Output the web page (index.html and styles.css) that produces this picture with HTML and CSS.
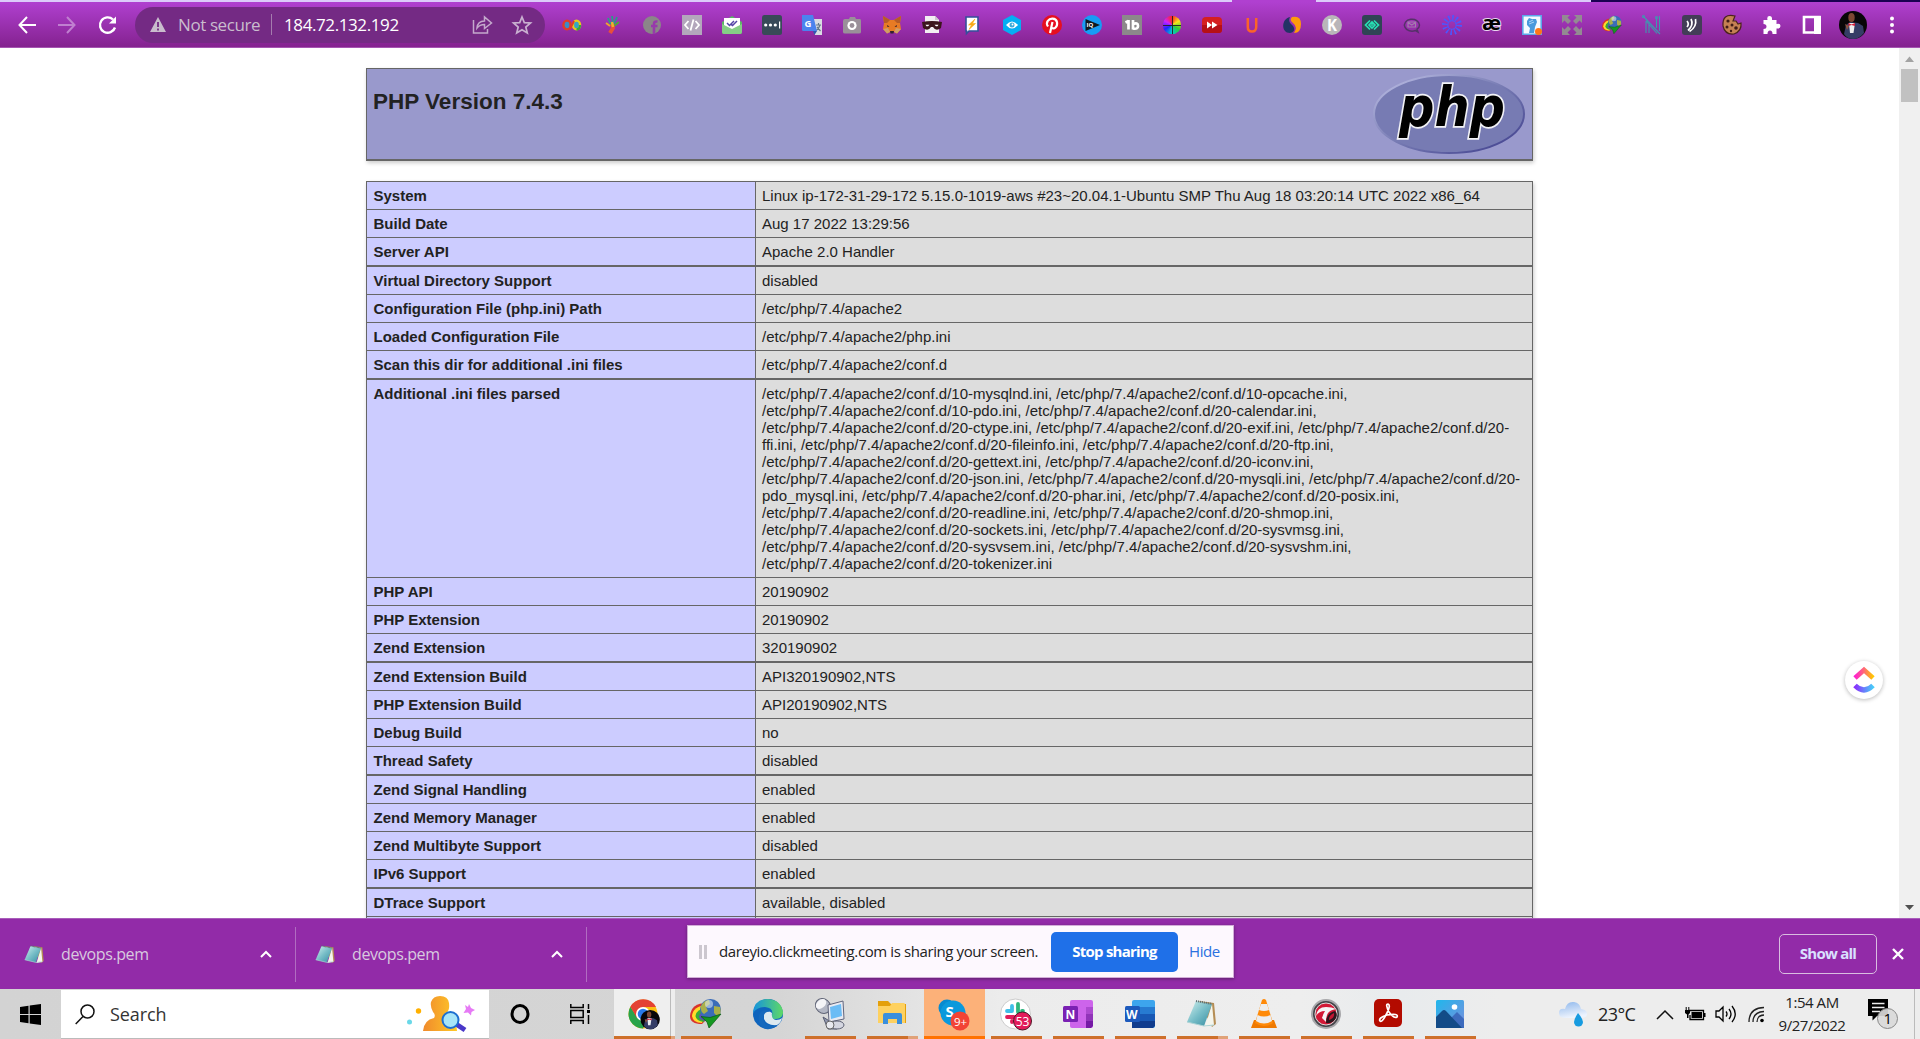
FILE: index.html
```html
<!DOCTYPE html>
<html lang="en">
<head>
<meta charset="utf-8">
<title>phpinfo()</title>
<link rel="stylesheet" href="styles.css">
</head>
<body>
<div class="tabstrip"><i class="tab-light first"></i><i class="tab-active"></i><i class="tab-light second"></i></div>
<header class="toolbar">
  <nav class="nav">
    <svg width="20" height="20" viewBox="0 0 20 20" fill="none" stroke="#fff" stroke-width="2"><path d="M19 10H3M10 2L2.500 10L10 18"/></svg>
    <svg width="20" height="20" viewBox="0 0 20 20" fill="none" stroke="#c07fd0" stroke-width="2"><path d="M1 10H17M10 2L17.500 10L10 18"/></svg>
    <svg width="20" height="20" viewBox="0 0 20 20"><path d="M18 12.500A7.700 7.700 0 1 1 16 4.500" fill="none" stroke="#fff" stroke-width="2.400"/><path d="M19 1.500V8.500H12Z" fill="#fff"/></svg>
  </nav>
  <div class="omnibox">
    <svg width="16" height="15" viewBox="0 0 16 15"><path d="M8 0L16 15H0Z" fill="#c9bccd"/><path d="M8 5V10M8 11.500V13.500" stroke="#742a84" stroke-width="1.800"/></svg>
    <span class="secure">Not secure</span><i class="sep"></i><span class="url">184.72.132.192</span>
    <svg class="share" width="21" height="20" viewBox="0 0 21 20" fill="none" stroke="#c4a9cc" stroke-width="1.500"><path d="M1.500 5V18H15.500V14"/><path d="M5 13C5.500 8 9 6 12.500 6V2L19.500 8L12.500 13.500V9.500C9 9.500 7 10.500 5 13Z"/></svg>
    <svg class="star" width="20" height="20" viewBox="0 0 20 20" fill="none" stroke="#c9b0d0" stroke-width="1.700"><path d="M10 2L12.300 7.600L18.500 8L13.800 12L15.300 18L10 14.800L4.700 18L6.200 12L1.500 8L7.700 7.600Z"/></svg>
  </div>
  <div class="extensions">
    <svg viewBox="0 0 20 20"><ellipse cx="5" cy="10" rx="3.600" ry="4.400" fill="#3a8cc8" stroke="#e03c28" stroke-width="2.400"/><ellipse cx="14.500" cy="10" rx="3.600" ry="4.400" fill="#35a5c5" stroke="#e8c81e" stroke-width="2.400"/><path d="M8 14L12 6" stroke="#e03c28" stroke-width="2"/><path d="M14.500 14.600A4 4.500 0 0 0 18 10" fill="none" stroke="#35a83c" stroke-width="2.200"/></svg>
    <svg viewBox="0 0 20 20" fill="none" stroke-width="1.800"><path d="M9 10L6 3M11 9L10 1M12 9L15 2" stroke="#2a9b8a"/><path d="M12 11L17 7" stroke="#4cad36"/><path d="M8 11L4 8" stroke="#efa32d"/><path d="M10 9L11 13L8 18" stroke="#e7503a" stroke-width="4"/><path d="M10 7L11 12" stroke="#f0b02c" stroke-width="2.500"/></svg>
    <svg viewBox="0 0 20 20"><circle cx="10" cy="10" r="9" fill="#8b8589"/><path d="M12 19V9Q12 6 15.500 6.500M9 11H15.500" fill="none" stroke="#973aab" stroke-width="2.600"/></svg>
    <svg viewBox="0 0 20 20"><path d="M0 0H20V20H0Z" fill="#b3a7bc"/><path d="M6.500 6L3 10L6.500 14M13.500 6L17 10L13.500 14M11.500 4.500L8.500 15.500" fill="none" stroke="#fff" stroke-width="1.800"/></svg>
    <svg viewBox="0 0 20 20"><path d="M0 7L10 1L20 7V17Q20 19 18 19H2Q0 19 0 17Z" fill="#5db866"/><path d="M2 3H18V14H2Z" fill="#fff"/><path d="M0 9L10 14L20 9V17Q20 19 18 19H2Q0 19 0 17Z" fill="#85ce86"/><path d="M5 8L7.500 10.500L12 6M9 9.500L10.500 10.500L15 6" fill="none" stroke="#5443a6" stroke-width="1.500"/></svg>
    <svg viewBox="0 0 20 20"><rect width="20" height="20" rx="2.500" fill="#384a58"/><g fill="#fff"><circle cx="3.700" cy="10" r="1.600"/><circle cx="8.500" cy="10" r="1.600"/><circle cx="13.300" cy="10" r="1.600"/><path d="M17 6.500H18.200V13.500H17Z"/></g></svg>
    <svg viewBox="0 0 20 20"><path d="M9 4H20V20H13Z" fill="#dadce2"/><path d="M14 10H19M16.500 8V10M18 10Q17 14 13.500 16M15 12L18.500 16" fill="none" stroke="#65788a" stroke-width="1.200"/><path d="M0 0H11L15 16H1.500Q0 16 0 14.500Z" fill="#4b83ee"/><path d="M11 16H15L12.500 20Z" fill="#3156b0"/><text x="2.500" y="11.500" class="glyph" fill="#fff" font-size="9.500">G</text></svg>
    <svg viewBox="0 0 20 20"><path d="M3 4H7L8 2H13L14 4H18Q19 4 19 6V17Q19 18.500 17 18.500H3Q1 18.500 1 17V6Q1 4 3 4Z" fill="#9a9099"/><circle cx="10" cy="10.500" r="4.600" fill="#fff"/><circle cx="10" cy="10.500" r="2.400" fill="#9a9099"/></svg>
    <svg viewBox="0 0 20 20"><path d="M1 1L8 5H12L19 1L18 8L19 14L15 18.500L12 17H8L5 18.500L1 14L2 8Z" fill="#e77b24"/><path d="M1 1L8 5L5 8L2 8ZM19 1L12 5L15 8L18 8Z" fill="#b65c25"/><path d="M1 14L6 13L8 17L5 18.500ZM19 14L14 13L12 17L15 18.500Z" fill="#cf9e68"/><path d="M8 16H12L11.500 18.500H8.500ZM5 10L7.500 11.500L5.500 12ZM15 10L12.500 11.500L14.500 12Z" fill="#30222c"/></svg>
    <svg viewBox="0 0 20 20"><path d="M3 1H13L17 5V18H3Z" fill="#f2eff2"/><path d="M13 1V5H17" fill="#cdc5d0"/><path d="M0 7Q10 5 20 7L19 13Q14 17 11 12H9Q6 17 1 13Z" fill="#3c151c"/><path d="M3.500 9.800H7.500L6 11.200H4.500ZM12.500 9.800H16.500L15.500 11.200H14Z" fill="#fff"/></svg>
    <svg viewBox="0 0 20 20"><path d="M4 2H16V16H7L4.500 18.500V16H4Z" fill="#fff" stroke="#354f9c" stroke-width="1.600"/><path d="M13 4L6.500 10L9.500 10L7 14.500L13.500 8.500H10.500Z" fill="#f8a914" stroke="#f8a914" stroke-width=".6"/></svg>
    <svg viewBox="0 0 20 20"><path d="M10 0L19 5V15L10 20L1 15V5Z" fill="#05aef3"/><path d="M4 10Q10 3 16 10Q10 17 4 10Z" fill="#fff"/><circle cx="10" cy="10" r="2.500" fill="#3fa9d7"/><circle cx="10.500" cy="9.500" r=".9" fill="#fff"/></svg>
    <svg viewBox="0 0 20 20"><circle cx="10" cy="10" r="10" fill="#e60f20"/><path d="M8 18L10.500 7M6 11.500C3 7 7 3.500 10.500 3.700C16 4 16 10 13.500 12.500C12 14 10 13.500 9.500 12" fill="none" stroke="#fff" stroke-width="2.200"/></svg>
    <svg viewBox="0 0 20 20"><circle cx="10" cy="10" r="10" fill="#179bf5"/><path d="M3.500 4L18 10L3.500 16Z" fill="#101820"/><text x="4.500" y="12" class="glyph" fill="#fff" font-size="6">IQ</text></svg>
    <svg viewBox="0 0 20 20"><path d="M0 0H20V20H0Z" fill="#8c888b"/><path d="M6.500 5V14.500M3.500 7.500L6.500 6M11 5V14.500M11 9Q16 7 16 11Q16 14.500 11 13.500" fill="none" stroke="#fff" stroke-width="2.700"/></svg>
    <div class="wheel"></div>
    <svg viewBox="0 0 20 20"><rect y="2" width="20" height="16" rx="4" fill="#d51f20"/><path d="M0 10H20V15Q20 18 17 18H3Q0 18 0 15Z" fill="#b61016"/><path d="M5 6.500L10 10L5 13.500ZM10 6.500L15.500 10L10 13.500Z" fill="#fff"/></svg>
    <svg viewBox="0 0 20 20"><path d="M5.800 3V12Q5.800 16.500 10 16.500T14.200 12V3" fill="none" stroke="#fb632a" stroke-width="2.500"/></svg>
    <svg viewBox="0 0 20 20"><path d="M8 2C-1 4-1 18 8 18C14 17 13 12 9 9Q6 6 8 2Z" fill="#233366"/><path d="M10 2Q19 0 19 9T12 18Q16 12 11 8Q7 5 10 2Z" fill="#ff9b0a"/></svg>
    <svg viewBox="0 0 20 20"><circle cx="10" cy="10" r="10" fill="#b9b6b9"/><text x="5" y="16" class="glyph" fill="#fff" font-size="16" textLength="10" lengthAdjust="spacingAndGlyphs">K</text></svg>
    <svg viewBox="0 0 20 20"><rect width="20" height="20" rx="3" fill="#304455"/><path d="M8 5.500L3.500 10L8 14.500M12 5.500L16.500 10L12 14.500M7 10L10 7L13 10L10 13Z" fill="none" stroke="#26e0b3" stroke-width="1.700"/><path d="M8.500 10H11.500" stroke="#26e0b3" stroke-width="1.500"/></svg>
    <svg viewBox="0 0 20 20" fill="none" stroke="#563169" stroke-width="1.500"><path d="M13.500 15.500A7.500 6 0 1 1 17.500 10Q17.500 12.500 15 14.200L16 17Z"/><path d="M6 7H13.500V12H6ZM6 7.500L9.800 10L13.500 7.500" stroke="#a47bae" stroke-width="1.200"/></svg>
    <svg viewBox="0 0 20 20"><circle cx="10" cy="10" r="7" fill="none" stroke="#4b58ff" stroke-width="6" stroke-dasharray="1.400 2.265"/><circle cx="10" cy="10" r="4.200" fill="none" stroke="#4b58ff" stroke-width="1.100"/></svg>
    <svg viewBox="0 0 20 20"><text x="0" y="15" class="glyph ae" font-size="19" textLength="19" lengthAdjust="spacingAndGlyphs">æ</text></svg>
    <svg viewBox="0 0 20 20"><path d="M.8.800H19.200V19.200H.8Z" fill="#f5faff" stroke="#5ba7ea" stroke-width="1.600"/><path d="M5 6L7 3L10 4L14 4L15 7L13 12L12 18H7L8 13L5 10Z" fill="#4999dc"/><path d="M7 7L11 5M7 9L12 7" stroke="#d8ecff" stroke-width=".7"/><circle cx="16.500" cy="16.500" r="3.500" fill="#ff7617"/></svg>
    <svg viewBox="0 0 20 20" fill="#938a92"><path d="M0 0H8L5.500 2.500L9 6L6 9L2.500 5.500L0 8ZM20 0H12L14.500 2.500L11 6L14 9L17.500 5.500L20 8ZM0 20H8L5.500 17.500L9 14L6 11L2.500 14.500L0 12ZM20 20H12L14.500 17.500L11 14L14 11L17.500 14.500L20 12Z"/></svg>
    <svg viewBox="0 0 32 32"><use href="#idm"/></svg>
    <svg viewBox="0 0 20 20" fill="none" stroke="#3c9bb0" stroke-width="1.100"><path d="M2 2L18 19M4 6L15 18.500M4 6V18M7 9.500V18M14.500 3V13M17.500 1V16"/><circle cx="1.500" cy="1.500" r="1"/><circle cx="14.500" cy="2.500" r="1"/></svg>
    <svg viewBox="0 0 20 20"><rect width="20" height="20" rx="3" fill="#433d57"/><path d="M5 6Q7.500 9 5 12M9 4Q12 10 6 15.500M13.500 4Q15 12 7.500 16.500" fill="none" stroke="#fff" stroke-width="1.700"/></svg>
    <svg viewBox="0 0 20 20"><path d="M13 1Q0-2 1 11Q3 20 12 19Q20 16 19 8L16 9L14 6H11Z" fill="#c58153" stroke="#4b231c" stroke-width="1.200"/><g fill="#401c17"><circle cx="6" cy="6" r="1.600"/><circle cx="10" cy="10" r="1.500"/><circle cx="5" cy="12" r="1.500"/><circle cx="14" cy="13" r="1.800"/><circle cx="9" cy="16" r="1.200"/></g></svg>
    <svg viewBox="0 0 20 20"><path d="M2 5H6Q5 1 8 1T10.500 5H15V9Q19 8 19 11T15 13.500V19H11Q11 15.500 8.500 15.500T6 19H2V14Q5 14 5 11.500T2 9Z" fill="#fff" transform="translate(-.5 0)"/></svg>
    <svg viewBox="0 0 20 20"><path d="M2 2H17.500V17.500H2Z" fill="none" stroke="#fff" stroke-width="2.600"/><path d="M12 1H19V19H12Z" fill="#fff"/></svg>
  </div>
  <svg class="avatar" width="28" height="28" viewBox="0 0 28 28"><use href="#person"/></svg>
  <svg width="6" height="18" viewBox="0 0 6 18" fill="#fff"><circle cx="3" cy="2.500" r="2"/><circle cx="3" cy="9" r="2"/><circle cx="3" cy="15.500" r="2"/></svg>
</header>

<main class="viewport">
  <div class="page">
    <section class="banner">
      <h1>PHP Version 7.4.3</h1>
      <svg width="152" height="82" viewBox="0 0 152 82">
        <defs><linearGradient id="rim" x1="0" y1="0" x2="1" y2="1"><stop offset=".1" stop-color="#b2b4dd"/><stop offset=".5" stop-color="#777bb3"/><stop offset=".9" stop-color="#484893"/></linearGradient></defs>
        <ellipse cx="75" cy="41" rx="75" ry="39" fill="#777bb3" stroke="url(#rim)" stroke-width="2"/>
        <text x="25" y="53" class="phptext" textLength="106" lengthAdjust="spacingAndGlyphs">php</text>
      </svg>
    </section>
    <section class="info">
      <div class="row"><b>System</b><span>Linux ip-172-31-29-172 5.15.0-1019-aws #23~20.04.1-Ubuntu SMP Thu Aug 18 03:20:14 UTC 2022 x86_64</span></div>
      <div class="row"><b>Build Date</b><span>Aug 17 2022 13:29:56</span></div>
      <div class="row"><b>Server API</b><span>Apache 2.0 Handler</span></div>
      <div class="row thick"><b>Virtual Directory Support</b><span>disabled</span></div>
      <div class="row"><b>Configuration File (php.ini) Path</b><span>/etc/php/7.4/apache2</span></div>
      <div class="row"><b>Loaded Configuration File</b><span>/etc/php/7.4/apache2/php.ini</span></div>
      <div class="row"><b>Scan this dir for additional .ini files</b><span>/etc/php/7.4/apache2/conf.d</span></div>
      <div class="row thick"><b>Additional .ini files parsed</b><span>/etc/php/7.4/apache2/conf.d/10-mysqlnd.ini, /etc/php/7.4/apache2/conf.d/10-opcache.ini,<br>/etc/php/7.4/apache2/conf.d/10-pdo.ini, /etc/php/7.4/apache2/conf.d/20-calendar.ini,<br>/etc/php/7.4/apache2/conf.d/20-ctype.ini, /etc/php/7.4/apache2/conf.d/20-exif.ini, /etc/php/7.4/apache2/conf.d/20-<br>ffi.ini, /etc/php/7.4/apache2/conf.d/20-fileinfo.ini, /etc/php/7.4/apache2/conf.d/20-ftp.ini,<br>/etc/php/7.4/apache2/conf.d/20-gettext.ini, /etc/php/7.4/apache2/conf.d/20-iconv.ini,<br>/etc/php/7.4/apache2/conf.d/20-json.ini, /etc/php/7.4/apache2/conf.d/20-mysqli.ini, /etc/php/7.4/apache2/conf.d/20-<br>pdo_mysql.ini, /etc/php/7.4/apache2/conf.d/20-phar.ini, /etc/php/7.4/apache2/conf.d/20-posix.ini,<br>/etc/php/7.4/apache2/conf.d/20-readline.ini, /etc/php/7.4/apache2/conf.d/20-shmop.ini,<br>/etc/php/7.4/apache2/conf.d/20-sockets.ini, /etc/php/7.4/apache2/conf.d/20-sysvmsg.ini,<br>/etc/php/7.4/apache2/conf.d/20-sysvsem.ini, /etc/php/7.4/apache2/conf.d/20-sysvshm.ini,<br>/etc/php/7.4/apache2/conf.d/20-tokenizer.ini</span></div>
      <div class="row"><b>PHP API</b><span>20190902</span></div>
      <div class="row"><b>PHP Extension</b><span>20190902</span></div>
      <div class="row"><b>Zend Extension</b><span>320190902</span></div>
      <div class="row thick"><b>Zend Extension Build</b><span>API320190902,NTS</span></div>
      <div class="row"><b>PHP Extension Build</b><span>API20190902,NTS</span></div>
      <div class="row"><b>Debug Build</b><span>no</span></div>
      <div class="row"><b>Thread Safety</b><span>disabled</span></div>
      <div class="row thick"><b>Zend Signal Handling</b><span>enabled</span></div>
      <div class="row"><b>Zend Memory Manager</b><span>enabled</span></div>
      <div class="row"><b>Zend Multibyte Support</b><span>disabled</span></div>
      <div class="row"><b>IPv6 Support</b><span>enabled</span></div>
      <div class="row thick"><b>DTrace Support</b><span>available, disabled</span></div>
      <div class="row"><b></b><span></span></div>
    </section>
  </div>
  <aside class="scrollbar">
    <svg width="21" height="21" viewBox="0 0 21 21"><path d="M10.500 8.500L15 14H6Z" fill="#a3a3a3"/></svg>
    <i class="thumb"></i>
    <svg class="down" width="21" height="21" viewBox="0 0 21 21"><path d="M6 8H15L10.500 13Z" fill="#505050"/></svg>
  </aside>
  <div class="clickup">
    <svg width="22" height="28" viewBox="0 0 22 28" fill="none" stroke-width="5">
      <defs><linearGradient id="cu1"><stop offset="0" stop-color="#ff1fd0"/><stop offset=".5" stop-color="#ff6a75"/><stop offset="1" stop-color="#ffc800"/></linearGradient><linearGradient id="cu2"><stop offset="0" stop-color="#8930fd"/><stop offset="1" stop-color="#49ccf9"/></linearGradient></defs>
      <path d="M2 12L11 4L20 12" stroke="url(#cu1)"/><path d="M2 19.500Q11 28.500 20 19.500" stroke="url(#cu2)"/></svg>
  </div>
</main>

<section class="downloads">
  <div class="item"><svg class="file" viewBox="0 0 32 32"><use href="#notepad"/></svg><span>devops.pem</span><svg class="up" width="12" height="8" viewBox="0 0 12 8"><path d="M1 7L6 2L11 7" fill="none" stroke="#fff" stroke-width="2"/></svg></div>
  <div class="item"><svg class="file" viewBox="0 0 32 32"><use href="#notepad"/></svg><span>devops.pem</span><svg class="up" width="12" height="8" viewBox="0 0 12 8"><path d="M1 7L6 2L11 7" fill="none" stroke="#fff" stroke-width="2"/></svg></div>
  <button class="showall">Show all</button>
  <svg width="12" height="12" viewBox="0 0 12 12"><path d="M1 1L11 11M11 1L1 11" stroke="#fff" stroke-width="2.400"/></svg>
  <div class="sharing"><i class="grip"></i><span class="msg">dareyio.clickmeeting.com is sharing your screen.</span><button class="stop">Stop sharing</button><span class="hide">Hide</span></div>
</section>

<footer class="taskbar">
  <div class="start"><svg width="21" height="21" viewBox="0 0 21 21"><path d="M0 3L8.500 1.800V10H0ZM9.700 1.600L21 0V10H9.700ZM0 11H8.500V19.300L0 18ZM9.700 11H21V21L9.700 19.500Z"/></svg></div>
  <div class="search">
    <svg width="20" height="21" viewBox="0 0 20 21" fill="none" stroke="#111" stroke-width="1.500"><circle cx="12.500" cy="7.500" r="6.500"/><path d="M8 12.500L.7 20"/></svg>
    <span>Search</span>
    <svg class="art" width="68" height="36" viewBox="0 0 68 36">
      <defs><linearGradient id="gold"><stop offset="0" stop-color="#f08a2c"/><stop offset="1" stop-color="#ffc928"/></linearGradient></defs>
      <circle cx="2.500" cy="26" r="2.500" fill="#6ad8e8"/><circle cx="11.500" cy="15" r="2.700" fill="#ffb000"/>
      <path d="M16 35Q17 24 27 22Q29 19 26 16Q23 10 24 6Q26 0 33 0Q41 0 42 7Q43 15 39 17Q37 21 42 23Q50 26 50 35Z" fill="url(#gold)"/>
      <path d="M49 28L58 34" stroke="#4a38c8" stroke-width="5"/><circle cx="43.500" cy="24" r="8" fill="#a8e5f8" stroke="#1d6fd0" stroke-width="2"/>
      <path d="M62 8L64 12L68 14L64.500 16L64 19.500L61 16.500L56.500 17L59 13L58 9L61 11Z" fill="#e67af5"/></svg>
  </div>
  <div class="sys">
    <svg width="20" height="22" viewBox="0 0 20 22"><ellipse cx="10" cy="11" rx="8" ry="8.500" fill="none" stroke="#000" stroke-width="3"/></svg>
    <svg width="21" height="20" viewBox="0 0 21 20" fill="none" stroke="#000" stroke-width="1.500"><path d="M.8 0V3.500H13.200V0M.8 6.500H13.200V13.500H.8ZM.8 20V16.500H13.200V20M18.500 0V5M18.500 11V20"/><path d="M17 6H20V9H17Z" fill="#000" stroke="none"/></svg>
  </div>
  <div class="apps">
    <div class="app bright"><svg viewBox="0 0 32 32"><circle cx="15" cy="16" r="14.500" fill="#fbbf12"/><path d="M2.400 8.800A14.500 14.500 0 0 0 15 30.500L21 19L9 19Z" fill="#28a34b"/><path d="M15 16L9 20L2.400 8.800A14.500 14.500 0 0 1 28 9H15Z" fill="#e44234"/><circle cx="15" cy="16" r="7" fill="#fff"/><circle cx="15" cy="16" r="5.300" fill="#2979e8"/><g transform="translate(12.500 12) scale(.69)"><use href="#person"/></g></svg></div>
    <div class="app"><svg viewBox="0 0 32 32"><g id="idm"><path d="M17 5Q1 5 0 18Q0 26 12 26L20 18Z" fill="#d9342b"/><path d="M17 7Q3 8 2 18Q3 25 12 25Z" fill="#ffdc2a"/><path d="M17 10Q6 11 5.500 18Q6 23 14 24Z" fill="#37ac39"/><path d="M17 13Q9 14 9 19Q10 22 16 23Z" fill="#5c4fb5"/><circle cx="20.500" cy="11.500" r="10.500" fill="#3a6cb8"/><path d="M11 8Q14 2 19 2L20 6L16 9L18 13L14 16Q10 13 11 8ZM24 8L30 9Q32 15 28 19L24 15Z" fill="#a9b04a"/><circle cx="19" cy="6" r="4" fill="#e3eefa" opacity=".55"/><path d="M11 18.500L20 19.500L31 16L19 30L17 24Z" fill="#159821" stroke="#0a5913" stroke-width=".7"/></g></svg></div>
    <div class="app idle"><svg viewBox="0 0 32 32"><defs><linearGradient id="edge"><stop offset="0" stop-color="#1592df"/><stop offset="1" stop-color="#5ed965"/></linearGradient></defs><circle cx="16" cy="16" r="15" fill="#0e64bd"/><path d="M1 15Q2 1 16 1Q29 2 31 14Q31 21 23 21Q18 21 20 17Q22 10 13 9Q5 9 1 15Z" fill="url(#edge)"/><path d="M12 15Q15 11 20 15Q19 21 24 22Q28 22 30 20Q29 25 25 27Q15 28 12 21Z" fill="#dce9f0"/><path d="M12 17Q8 28 25 28Q20 32 14 31Q5 28 7 17Q9 12 14 12Q17 12 18 14Q14 13 12 17Z" fill="#1468bd"/></svg></div>
    <div class="app"><svg viewBox="0 0 32 32"><path d="M9 19L17 24L23 31H14Z" fill="#9197ad" stroke="#575c71"/><ellipse cx="9" cy="8" rx="8" ry="7" fill="#b3b7c4" stroke="#5f6375" transform="rotate(40 9 8)"/><ellipse cx="7" cy="6" rx="4" ry="6" fill="#f4f4f7" transform="rotate(50 7 6)"/><path d="M14 7L29 3L30 21L15 24Z" fill="#e8eaf2" stroke="#62667d"/><path d="M16 9L27 6L28 18L17 21Z" fill="#6bbcf5"/><ellipse cx="23" cy="27" rx="7" ry="4" fill="#d5d7e1" stroke="#5f6375"/><circle cx="16" cy="27" r="4" fill="#e8e9ef" stroke="#666"/></svg></div>
    <div class="app multi"><svg viewBox="0 0 32 32"><path d="M2 3H12L15 6H30V25H2Z" fill="#e4a00c"/><path d="M2 8H14L16 5H28Q29 5 29 7V25H2Z" fill="#fed160"/><path d="M7 26V17Q7 15 9 15H24Q26 15 26 17V26H21V21H12V26Z" fill="#3a8fdd"/></svg></div>
    <div class="app orange"><svg viewBox="0 0 32 32"><circle cx="9" cy="10" r="8.500" fill="#078bd0"/><circle cx="20" cy="20" r="9" fill="#0896db"/><circle cx="15" cy="15" r="12.500" fill="#0a99dc"/><text x="7.500" y="19" class="glyph" font-size="15" fill="#fff">S</text><circle cx="22" cy="23" r="9.500" fill="#f24435"/><text x="16" y="28" class="plain" font-size="11.500" fill="#fff">9+</text></svg></div>
    <div class="app"><svg viewBox="0 0 32 32"><circle cx="15.500" cy="16" r="15" fill="#fff" stroke="#ccc"/><g stroke-width="3.800" stroke-linecap="round"><path d="M12 8V13M7 13H12" stroke="#40bfe8"/><path d="M18 6V14M23 13H22" stroke="#2eb67d"/><path d="M7 19H14M12 23V24" stroke="#e01e5a"/><path d="M18 20H22" stroke="#ecb22e"/></g><circle cx="22.500" cy="23" r="9" fill="#e31b5b" stroke="#4a1725"/><text x="15.700" y="27.500" class="plain" font-size="12" fill="#fff">53</text></svg></div>
    <div class="app"><svg viewBox="0 0 32 32"><rect x="8" y="2" width="23" height="28" rx="2" fill="#cd64eb"/><path d="M24 9H31V16H24Z" fill="#ad4ad0"/><path d="M24 16H31V23H24Z" fill="#9134b9"/><path d="M24 23H31V28L29 30H24Z" fill="#751aa5"/><rect x="1" y="8" width="15" height="16" rx="1.500" fill="#7a21b3"/><text x="3.500" y="20.500" class="glyph" font-size="12" fill="#fff">N</text></svg></div>
    <div class="app"><svg viewBox="0 0 32 32"><rect x="8" y="2" width="23" height="28" rx="2" fill="#3da5ed"/><path d="M8 9H31V16H8Z" fill="#277bd1"/><path d="M8 16H31V23H8Z" fill="#1858b4"/><path d="M8 23H31V28L29 30H8Z" fill="#103c8d"/><rect x="1" y="8" width="15" height="16" rx="1.500" fill="#1d5abc"/><text x="2" y="20.500" class="glyph" font-size="12" fill="#fff">W</text></svg></div>
    <div class="app multi"><svg viewBox="0 0 32 32"><defs><linearGradient id="paper" x2="1" y2="1"><stop offset="0" stop-color="#d5f1ee"/><stop offset=".5" stop-color="#78bec8"/><stop offset="1" stop-color="#348ba0"/></linearGradient></defs><g id="notepad"><path d="M13 3L28 5L30 26L26 29Z" fill="#b58d54"/><path d="M26 6L28 27L19 29Z" fill="#f4f5ed"/><path d="M10 3L26 6L18 28L1 24Z" fill="url(#paper)"/><path d="M10 3L26 6" stroke="#5d6c70" stroke-width="2" stroke-dasharray="1 1"/><path d="M1 24L18 28L28 27" fill="none" stroke="#acd3d5"/></g></svg></div>
    <div class="app"><svg viewBox="0 0 32 32"><path d="M6 22H26L29 30H3Z" fill="#ef7900"/><path d="M14 2Q16 0 18 2L25 25Q16 31 7 25Z" fill="#ff8a08"/><path d="M13 6H19L21 12Q16 14 11 12ZM9.500 17Q16 20 22.500 17L24 23Q16 28 8 23Z" fill="#ededed"/></svg></div>
    <div class="app"><svg viewBox="0 0 32 32"><circle cx="16" cy="16" r="14" fill="#444449" stroke="#a8a8ab" stroke-width="2"/><circle cx="16" cy="16" r="11" fill="#d21836" stroke="#ddd"/><path d="M6 18Q7 9 16 9Q22 9 26 11Q20 12 18 15Q16 18 16 24L12 20Q13 16 15 13Q9 13 6 18Z" fill="#f6f4f5"/><path d="M16 25Q16 15 25 13Q28 16 26 20Q23 26 16 25Z" fill="#2c161d"/><path d="M19 22Q19 17 24 15Q25 20 19 22Z" fill="#c31734"/></svg></div>
    <div class="app"><svg viewBox="0 0 32 32"><rect x="2" y="1" width="28" height="28" rx="5" fill="#b30b00"/><path d="M8 23Q6 20 15 17Q27 15 25 19Q22 21 17 14Q13 6 16 6Q19 7 15 15Q10 25 8 23Z" fill="none" stroke="#fff" stroke-width="1.700"/></svg></div>
    <div class="app"><svg viewBox="0 0 32 32"><defs><linearGradient id="sky" x2="1" y2="1"><stop offset="0" stop-color="#20b7ec"/><stop offset="1" stop-color="#7b8ddc"/></linearGradient></defs><rect x="2" y="2" width="28" height="28" rx="1.500" fill="url(#sky)"/><circle cx="20.500" cy="9" r="2.800" fill="#fff"/><path d="M15 22L23 14L30 21V30H15Z" fill="#3d6bbd"/><path d="M2 19L8 13Q10 11 12 13L28 30H2Z" fill="#134b87"/></svg></div>
  </div>
  <div class="tray">
    <svg class="weather" width="29" height="27" viewBox="0 0 29 27"><defs><linearGradient id="cloud" x2=".3" y2="1"><stop offset="0" stop-color="#8fb8ec"/><stop offset="1" stop-color="#edf3fd"/></linearGradient></defs><path d="M6 17Q0 17 0 12T6 8Q8 0 15 1Q21 2 22 8Q29 9 28 14Q27 17 22 17Z" fill="url(#cloud)"/><path d="M19 12Q24 18 24 21A4.500 4.500 0 0 1 15 21Q15 18 19 12Z" fill="#179be0"/></svg>
    <span class="temp">23°C</span>
    <svg class="chev" width="18" height="11" viewBox="0 0 18 11"><path d="M1 10L9 2L17 10" fill="none" stroke="#111" stroke-width="1.500"/></svg>
    <svg class="bat" width="21" height="14" viewBox="0 0 21 14"><path d="M4 3.500H18.500V12.500H5V8" fill="none" stroke="#000" stroke-width="1.300"/><path d="M6.500 5H17V11H6.500ZM18 6H20.500V10H18ZM0 3H5V6L3.500 7.500V11H2V7.500L0 6Z"/><path d="M1.200 0V3M3.800 0V3" stroke="#000"/></svg>
    <svg class="vol" width="22" height="18" viewBox="0 0 22 18" fill="none" stroke="#000" stroke-width="1.300"><path d="M1 6H4L8 2V16L4 12H1ZM11 6.500Q13 9 11 11.500M14 4Q18 9 14 14M17 1Q23.500 9 17 17"/></svg>
    <svg class="wifi" width="17" height="17" viewBox="0 0 17 17" fill="none" stroke="#222" stroke-width="1.300"><path d="M1 16Q1 2 16 1.500M5 16Q5 6 16 5.500M9 16Q9 9.500 16 9"/><circle cx="14" cy="14.500" r="1.800" fill="#000" stroke="none"/></svg>
    <div class="clock"><span>1:54 AM</span><span>9/27/2022</span></div>
    <svg class="note" width="32" height="32" viewBox="0 0 32 32"><path d="M1 1H21V18H10L5.500 22.500V18H1Z"/><path d="M5 5.500H17.500M5 9.500H17.500M5 13.500H13" stroke="#eee" stroke-width="1.300"/><circle cx="20.500" cy="20.500" r="10" fill="#d9d9d9" fill-opacity=".92" stroke="#888"/><text x="16.500" y="26" class="plain" font-size="15">1</text></svg>
    <i class="peek"></i>
  </div>
</footer>
<svg width="0" height="0" class="defs"><defs><g id="person"><circle cx="14" cy="14" r="14" fill="#080608"/><path d="M5 23L7 14L11 11L19 12L24 15L25 22Q20 28 14 28Q8 28 5 23Z" fill="#353d66"/><path d="M10 12H16L14.500 22H11Z" fill="#eee"/><ellipse cx="12.500" cy="6.500" rx="3.200" ry="4.500" fill="#7d4733"/><path d="M9.500 12L12.500 13.500L16 12V15L12.500 14L9.500 15Z" fill="#d61e39"/><path d="M6 13L10 15L8 19Z" fill="#8c5540"/></g></defs></svg>
</body>
</html>
```
FILE: styles.css
```css
* { box-sizing: border-box; }
html, body { margin: 0; height: 100%; overflow: hidden; }
body { display: flex; flex-direction: column; background: #fff; font-family: "Open Sans", "Noto Sans", sans-serif; }
svg { display: block; flex: none; overflow: visible; }
button { font: inherit; margin: 0; padding: 0; }
.defs { position: absolute; }
.glyph { font-family: "Open Sans", sans-serif; font-weight: 700; }
.plain { font-family: "Open Sans", sans-serif; }

.tabstrip { flex: none; height: 2px; display: flex; background: #1a0052; }
.tab-light { background: #dccbfa; }
.tab-light.first { width: 1232px; }
.tab-active { width: 84px; background: #b040d0; }
.tab-light.second { width: 275px; }

.toolbar { flex: none; height: 46px; display: flex; align-items: center; padding-right: 24px; background: linear-gradient(#b040d0, #84228f); border-bottom: 1px solid #a655b2; }
.nav { width: 135px; padding-left: 17px; display: flex; gap: 20px; }
.omnibox { width: 410px; height: 36px; border-radius: 18px; background: #742a84; display: flex; align-items: center; padding-left: 15px; padding-right: 13px; font-size: 17px; white-space: nowrap; }
.secure { width: 93px; margin-left: 12px; color: #c9bccd; letter-spacing: -.4px; }
.sep { width: 1px; height: 21px; background: #a47cae; }
.url { margin-left: 12px; color: #fff; letter-spacing: -.4px; }
.share { margin-left: auto; }
.star { margin-left: 19px; }
.extensions { display: flex; margin-left: 7px; }
.extensions > * { width: 20px; height: 20px; margin: 0 10px; }
.wheel { border-radius: 50%; background: linear-gradient(#222, #222) center / 1px 100% no-repeat, linear-gradient(#222, #222) center / 100% 1px no-repeat, conic-gradient(#f22, #f8e71c, #3c3, #0cc, #22f, #c2f, #f22); transform: scale(.92); }
.ae { stroke: #e8d6ee; stroke-width: 2px; paint-order: stroke; }
.avatar { margin-left: 7px; margin-right: 22px; }

.viewport { flex: none; height: 870px; display: flex; position: relative; overflow: hidden; }
.page { flex: 1; display: flex; flex-direction: column; align-items: center; gap: 20px; padding-top: 20px; color: #222; font-family: "Liberation Sans", Arial, sans-serif; }
.banner, .info { width: 1167px; flex: none; border: 1px solid #666; box-shadow: 1px 2px 4px #ccc; }
.banner { height: 93px; display: flex; justify-content: space-between; padding: 4px 6px 0 6px; background: #99c; border-bottom-width: 2px; }
.banner h1 { margin: 16px 0 0; font-size: 22.500px; line-height: 26px; font-weight: 700; }
.phptext { font: italic bold 55px "DejaVu Sans", sans-serif; fill: #000; stroke: #f2f2f6; stroke-width: 3.500px; paint-order: stroke; }
.info { border-top: 0; }
.row { display: grid; grid-template-columns: 388px 1fr; border-top: 1px solid #666; background: #ddd; font-size: 15px; line-height: 17px; }
.row.thick { border-top-width: 2px; }
.row b { padding: 5px 6px 5px 6.500px; background: #ccf; min-height: 27px; }
.row span { padding: 5px 5px 5px 6px; border-left: 1px solid #666; white-space: nowrap; }

.scrollbar { width: 21px; background: #f0f0f0; display: flex; flex-direction: column; }
.thumb { width: 17px; height: 33px; margin-left: 2px; background: #c1c1c1; }
.scrollbar .down { margin-top: auto; }
.clickup { position: absolute; left: 1845px; top: 613px; width: 38px; height: 38px; border-radius: 50%; background: #fff; box-shadow: 0 1px 4px #bbb; display: grid; place-items: center; }

.downloads { flex: none; height: 71px; position: relative; display: flex; align-items: center; padding-right: 16px; background: #922ba8; border-top: 1px solid #a85dba; }
.item { height: 55px; width: 291px; display: flex; align-items: center; padding-left: 19px; padding-right: 23px; border-right: 1px solid #b16cc1; color: #d8c9df; font-size: 16px; }
.item:first-child { width: 296px; padding-left: 24px; }
.item span { margin-left: 16px; letter-spacing: -.4px; }
.file { width: 21px; height: 21px; }
.up { margin-left: auto; }
.showall { margin-left: auto; margin-right: 15px; width: 98px; height: 40px; padding-bottom: 2px; border: 1px solid #d9bde0; border-radius: 5px; background: none; color: #d9e0ff; font-size: 15px; font-weight: 700; letter-spacing: -.75px; }
.sharing { position: absolute; left: 687px; top: 6px; width: 547px; height: 53px; display: flex; align-items: center; background: #fdf8fe; border: 1px solid #d3add9; box-shadow: 0 1px 3px #5c2469; white-space: nowrap; color: #222; font-size: 15px; }
.grip { width: 8px; height: 14px; margin-left: 11px; border: solid #ccc7cf; border-width: 0 3px; }
.msg { width: 332px; margin-left: 12px; padding-bottom: 2px; letter-spacing: -.4px; }
.stop { width: 127px; height: 40px; padding-bottom: 2px; border: 0; border-radius: 5px; background: #1f70e8; color: #fff; font-size: 15px; font-weight: 700; letter-spacing: -.75px; }
.hide { margin-left: 11px; padding-bottom: 2px; color: #2a70e0; letter-spacing: -.4px; }

.taskbar { flex: none; height: 50px; display: flex; background: linear-gradient(90deg, #d3d3d3 0, #d5d5d5 780px, #ececec 1000px, #eee 1300px, #e8ebed 1400px, #ededed 1500px); }
.start { width: 61px; padding: 15px 0 0 20px; }
.search { width: 428px; height: 49px; margin-top: 1px; display: flex; align-items: center; padding-left: 14px; padding-right: 14px; background: #fff; border-bottom: 1px solid #bbb; font-size: 18px; color: #333; }
.search span { margin-left: 15px; letter-spacing: -.1px; }
.art { margin-left: auto; }
.sys { width: 124px; display: flex; align-items: center; padding-left: 21px; gap: 40px; }
.apps { display: flex; }
.app { width: 62px; display: flex; flex-direction: column; justify-content: space-between; align-items: center; padding-top: 9px; }
.app > svg { width: 32px; height: 32px; }
.app::after { content: ""; width: 51px; height: 3px; background: #ce702b; }
.app.bright { background: linear-gradient(90deg, #d4d4d4 1px, #efefef 1px, #efefef 57px, #bbb 57px, #bbb 58px, #eee 58px); }
.app.bright::after { width: 61px; background: linear-gradient(90deg, #ce702b 57px, #e0a278 57px); }
.app.idle::after { background: none; }
.app.multi::after { background: linear-gradient(90deg, #ce702b 41px, #e0a278 41px); }
.app.orange { background: linear-gradient(90deg, transparent 1px, #fcb179 1px); }
.app.orange::after { width: 61px; margin-left: 1px; background: #ff7200; }
.tray { margin-left: 78px; flex: 1; display: flex; align-items: center; color: #222; }
.temp { width: 48px; margin-left: 10px; font-size: 18px; letter-spacing: -.6px; }
.chev { margin-left: 10px; }
.bat { margin-left: 11px; }
.vol { margin-left: 9px; }
.wifi { margin-left: 11px; }
.clock { width: 90px; display: flex; flex-direction: column; align-items: center; margin-left: 2px; font-size: 15px; line-height: 23px; letter-spacing: -.45px; }
.note { margin-left: 10px; }
.peek { width: 1px; height: 50px; margin-left: auto; margin-right: 5px; background: #bbb; }
```
